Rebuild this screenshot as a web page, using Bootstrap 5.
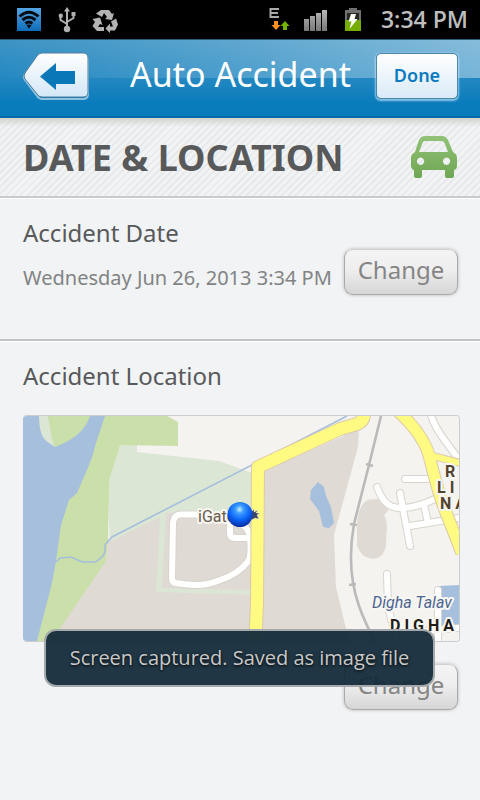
<!DOCTYPE html>
<html lang="en">
<head>
<meta charset="utf-8">
<meta name="viewport" content="width=device-width, initial-scale=1">
<title>Auto Accident</title>
<link href="https://cdn.jsdelivr.net/npm/bootstrap@5.3.0/dist/css/bootstrap.min.css" rel="stylesheet">
<style>
body{font-family:"Noto Sans","Open Sans",sans-serif;background:#f1f3f5;color:#58595b}
.status-bar{background:#000;height:39px;padding:0 12px 0 16px;color:#bebebe}
.clock-text{font-size:23px;line-height:39px;font-weight:600;font-family:"Open Sans",sans-serif}
.app-header{height:79px;padding:0 22px 4px;border-top:1px solid #2a5f7c;border-bottom:2px solid #0a69a8;
 background:linear-gradient(100deg,rgba(255,255,255,0) 0%,rgba(255,255,255,.16) 45%,rgba(255,255,255,.38) 100%) 0 0/100% 38px no-repeat,linear-gradient(#3d94c5,#2388c1 50%,#087bbb 85%,#087bbb)}
.app-title{font-size:34px;line-height:40px;padding-bottom:4px;color:#fff;font-weight:400}
.header-title-gap{gap:25px}
.done-btn{width:82px;height:46px;padding:0 0 2px;font-size:18px;line-height:24px;font-weight:600;color:#0b7abf;border:1px solid #4b86ab;border-radius:5px;background:linear-gradient(#fff,#d9eaf7);box-shadow:0 1px 2px 1px rgba(200,230,250,.7)}
.title-band{height:80px;padding:0 22px 0 23px;border-bottom:2px solid #c9cacc;box-shadow:0 1px 0 #fff;
 background:linear-gradient(#d3d4d0,rgba(225,226,224,0) 9px),repeating-linear-gradient(135deg,#f1f3f5 0 3px,#e8e9ea 3px 5px)}
.band-heading{font-size:36px;line-height:40px;padding-top:2px;font-weight:700;color:#58595a}
.panel{padding:16px 20px 0 23px}
.date-panel{height:143px;border-bottom:2px solid #c3c4c6;box-shadow:0 1px 0 #fff}
.panel-heading{font-size:24px;line-height:38px;font-weight:400}
.date-row{margin-top:-3px;padding-right:2px}
.date-text{font-size:20px;line-height:28px;padding-top:12px;color:#828384}
.change-btn{width:114px;height:46px;padding:0 0 4px;font-size:24px;line-height:32px;color:#858585;border:1px solid #a9a9a9;border-top-color:#d0d0d0;border-radius:9px;background:linear-gradient(#f4f4f4,#eee 45%,#d6d6d6);box-shadow:0 0 3px 1px rgba(0,0,0,.15)}
.map-actions{padding:22px 2px 0 0}
.map-box{border:1px solid #cbccce;border-left-width:0;border-radius:4px;margin-top:20px}
.map-box svg{display:block;width:100%;height:auto}
.map-box text{font-family:Roboto,sans-serif;paint-order:stroke;stroke:#f8f6f3;stroke-width:4px;stroke-linejoin:round}
.capture-toast{left:44px;right:45px;top:629px;padding:12px 8px;border:2px solid #a5a9ab;border-radius:12px;background:rgba(20,43,58,.95);color:#c8c8c8;font:20px/30px "Open Sans",sans-serif;text-shadow:0 1px 3px #000}
</style>
<script src="https://cdn.jsdelivr.net/npm/bootstrap@5.3.0/dist/js/bootstrap.bundle.min.js"></script>
</head>
<body class="position-relative min-vh-100">
<div class="status-bar d-flex align-items-center">
 <svg width="104" height="38" viewBox="16 0 104 38" aria-hidden="true">
  <defs><linearGradient id="wf" x2="0" y2="1"><stop stop-color="#55a5e4"/><stop offset="1" stop-color="#0d6cb8"/></linearGradient></defs>
  <rect x="17" y="7" width="24" height="23" fill="url(#wf)"/>
  <g fill="none" stroke="#020a12" stroke-width="3"><path d="M19.500 15.500Q29 7 38.500 15.500"/><path d="M22.500 19Q29 13.500 35.500 19"/><path d="M25.500 22.500Q29 19.500 32.500 22.500"/></g><path d="M26.500 24.500a4 4 0 0 1 5 0L29 27.500z" fill="#020a12"/>
  <g fill="none" stroke="#b0b0b0" stroke-width="2"><path d="M67 28V9M67 23L60.500 19V15M67 21L73.500 17V14"/></g>
  <g fill="#b0b0b0"><circle cx="67" cy="28" r="3.200"/><path d="M64 10.500h6L67 6z"/><circle cx="60.800" cy="14.700" r="2.200"/><path d="M71.500 11h4v4h-4z"/></g>
  <g fill="#b3b3b3"><path d="M101 9h8l3 4 2-1-2 7-7-1 2-2-3-4-2 4-6-3.500z"/><path d="M92.500 18l7.500-1.500 2.500 7.500-2.500-1-2 3h6v4h-7l-4.500-5 2.500-4z"/><path d="M111 20.500l5-3 2 6-3 6h-5v2.500l-4.500-4.500 4.500-5v3h3z"/></g>
 </svg>
 <svg class="ms-auto" width="100" height="38" viewBox="265 0 100 38" aria-hidden="true">
  <defs><linearGradient id="bar" x2="0" y2="1"><stop stop-color="#b8b8b8"/><stop offset="1" stop-color="#777"/></linearGradient></defs>
  <path d="M279 8h-8.500v8h8.500M271 12h7" fill="none" stroke="#aaa" stroke-width="2"/>
  <path d="M274 20h4v4h2.500L276 29l-4.500-5h2.500z" fill="#ff9024"/><path d="M283 29h4v-4h2.500L285 20l-4.500 5h2.500z" fill="#72b300"/>
  <g fill="url(#bar)"><path d="M304 18h5v12h-5zM310 15h5v15h-5zM316 12h5v18h-5zM322 9h5v21h-5z"/></g>
  <path d="M349 7h8v2h4v21h-16V9h4z" fill="#707070"/><path d="M347 12h12v7h-12z" fill="#242a20"/><path d="M345 19h16v11h-16z" fill="#77ac00"/><path d="M351 13h5l-1.500 5h3l-8 10 2-7.500h-3z" fill="#fff"/>
 </svg>
 <span class="clock-text ms-3">3:34 PM</span>
</div>
<header class="app-header d-flex align-items-center justify-content-between">
 <button type="button" class="btn p-0 border-0" aria-label="Back"><svg class="d-block" width="68" height="50" viewBox="22 52 68 50">
  <defs><linearGradient id="bk" x2="0" y2="1"><stop stop-color="#fff"/><stop offset="1" stop-color="#d3e7f6"/></linearGradient></defs>
  <path d="M42 56h41q5 0 5 5v34q0 5-5 5H42q-3 0-5-3L25 81q-2-3 0-6l12-16q2-3 5-3z" fill="none" stroke="#8fc1de" stroke-width="2"/>
  <path d="M42 54h41q5 0 5 5v34q0 5-5 5H42q-3 0-5-3L25 80q-2-3 0-6l12-17q2-3 5-3z" fill="url(#bk)" stroke="#4f7f9d"/>
  <path d="M40 77.500L56 64v8h19v13H56v6z" fill="#0a78b8"/></svg></button>
 <div class="header-title-gap d-flex align-items-center">
  <h1 class="app-title m-0">Auto Accident</h1>
  <button type="button" class="btn done-btn">Done</button>
 </div>
</header>
<main>
 <div class="title-band d-flex align-items-center justify-content-between">
  <h2 class="band-heading m-0">DATE &amp; LOCATION</h2>
  <svg width="48" height="44" viewBox="410 135 48 44" aria-hidden="true">
   <defs><linearGradient id="cg" x2="0" y2="1"><stop stop-color="#92c277"/><stop offset="1" stop-color="#6fa653"/></linearGradient></defs>
   <path fill="url(#cg)" fill-rule="evenodd" d="M425 136h17q4 0 6 4l5 12q4 2 4 6v8q0 3-3 4v6q0 2-2 2h-5q-2 0-2-2v-6h-23v6q0 2-2 2h-4q-2 0-2-2v-6q-3-1-3-4v-8q0-4 4-6l4-12q2-4 6-4zm0 5q-2 0-3 3l-3 8h29l-3-8q-1-3-3-3zm-4.500 16.500a3.700 3.700 0 1 0 .1 0zm26 0a3.700 3.700 0 1 0 .1 0z"/></svg>
 </div>
 <section class="panel date-panel">
  <h3 class="panel-heading m-0">Accident Date</h3>
  <div class="date-row d-flex align-items-center justify-content-between">
   <span class="date-text text-nowrap">Wednesday Jun 26, 2013 3:34 PM</span>
   <button type="button" class="btn change-btn flex-shrink-0">Change</button>
  </div>
 </section>
 <section class="panel">
  <h3 class="panel-heading m-0">Accident Location</h3>
  <div class="map-box overflow-hidden">
   <svg viewBox="24 416 436 225" role="img" aria-label="Map of the accident location">
    <defs><radialGradient id="pin" cx=".48" cy=".3" r=".65"><stop stop-color="#c8f0ff"/><stop offset=".25" stop-color="#3c9cff"/><stop offset=".65" stop-color="#0b62f5"/><stop offset="1" stop-color="#0634ad"/></radialGradient></defs>
    <path fill="#f4f3ef" d="M24 416h436v225H24z"/>
    <path fill="#dfdad4" d="M109 540L162 513H256V641H55L62 626 107 560z"/>
    <path fill="#dce6d4" d="M121 445h17v7l82 9 36 13v39H167l-4 75 93 2v5l-99-3 4-75-50 25-3-60z"/>
    <path fill="#cadfaa" d="M106 416h62l11 6v24l-58-1-11 35-1 61-2 20-45 66-3 14H36V416z"/>
    <path fill="#a5bfdd" d="M24 416h82l-9 27q-3 14-9 27l-10 23-8 7-8 25-5 36-4 22-15 58H24z"/>
    <path fill="#dce6d4" d="M40 416q0 22 10 27l6 4-7-31z"/><path fill="#cadfaa" d="M49 416q4 27 7 31 29-11 35-31z"/>
    <path fill="none" stroke="#a5bfdd" stroke-width="1.600" d="M57 562l4-4 11-1 11 5h13q10-5 10-12v-5l7-8L348 416"/>
    <path fill="#dfdad4" d="M264 471l96-42-1 18-24 88 2 52 13 54h-86z"/>
    <path fill="#dfdad4" d="M367 501q2-2 13-2 8 2 9 12l-4 4q3 5 3 13-1 12-1 18-3 13-14 13-12-2-15-14v-17q0-20 9-27z"/>
    <path fill="#a5bfdd" d="M319 482l6 5 2 9 5 11 3 16-5 5-6-1-4-16-9-12 1-9z"/>
    <path fill="#a5bfdd" d="M440 586l20-1v41h-20z"/>
    <g fill="none" stroke-linecap="round" stroke-linejoin="round">
     <g stroke="#d8d4cd" stroke-width="8"><path d="M210 514.500h-28q-7 0-8 8l-1 56q0 5 7 5 24 4 40-3 19-6 29-19 4-6 2-22M231 524v9q0 5 5 5h15M251 541q1-10-7-16"/><path d="M431 412q4 14 13 26l14 19M406 479h22M378 487q6 17 16 20 16 4 42-8M401 493l10 53M411 526l49-8M425 505l4 18M388 574l1 33 10 38M439 590v53M424 631l36-3"/></g>
     <g stroke="#fff" stroke-width="6"><path d="M210 514.500h-28q-7 0-8 8l-1 56q0 5 7 5 24 4 40-3 19-6 29-19 4-6 2-22M231 524v9q0 5 5 5h15M251 541q1-10-7-16"/><path d="M431 412q4 14 13 26l14 19M406 479h22M378 487q6 17 16 20 16 4 42-8M401 493l10 53M411 526l49-8M425 505l4 18M388 574l1 33 10 38M439 590v53M424 631l36-3"/></g>
    </g>
    <path fill="none" stroke="#bbbaba" stroke-width="2.600" d="M382 416l-12 49-15 59q-8 45 5 82 6 17 16 35M367 464l7 2M351 524l7 1M350 585l7-1"/>
    <g fill="none" stroke-linejoin="round">
     <g stroke="#dcc9aa"><path stroke-width="14" d="M256 645l2-40 1-138 82-38 17-5q7-3 7-10"/><path stroke-width="13" d="M399 411q27 25 32 48 9 37 17 56l15 38"/><path stroke-width="8" d="M430 455l31 8"/></g>
     <g stroke="#fffb82"><path stroke-width="12" d="M256 645l2-40 1-138 82-38 17-5q7-3 7-10"/><path stroke-width="11" d="M399 411q27 25 32 48 9 37 17 56l15 38"/><path stroke-width="6" d="M430 455l31 8"/></g>
    </g>
    <text x="199" y="522" font-size="16" fill="#6b5c4e">iGate</text>
    <path d="M251 513l4-4v3l4-2-2 3 4 0-3 2 2 4-4-1-3 2z" fill="#3c4664" stroke="#fff" stroke-width=".4"/>
    <circle cx="241" cy="514.500" r="12.600" fill="url(#pin)"/>
    <g font-weight="700" font-size="16" fill="#54442f"><text x="446" y="477">R</text><text x="438" y="493">L I</text><text x="441" y="509">N A</text></g>
    <text x="373" y="608" font-size="16" font-style="italic" fill="#4b6491">Digha Talav</text>
    <text x="391" y="631" font-size="16" font-weight="700" fill="#211c16">D I G H A</text>
   </svg>
  </div>
  <div class="map-actions d-flex justify-content-end"><button type="button" class="btn change-btn">Change</button></div>
 </section>
</main>
<div class="capture-toast position-absolute text-center text-nowrap" role="status">Screen captured. Saved as image file</div>
</body>
</html>
